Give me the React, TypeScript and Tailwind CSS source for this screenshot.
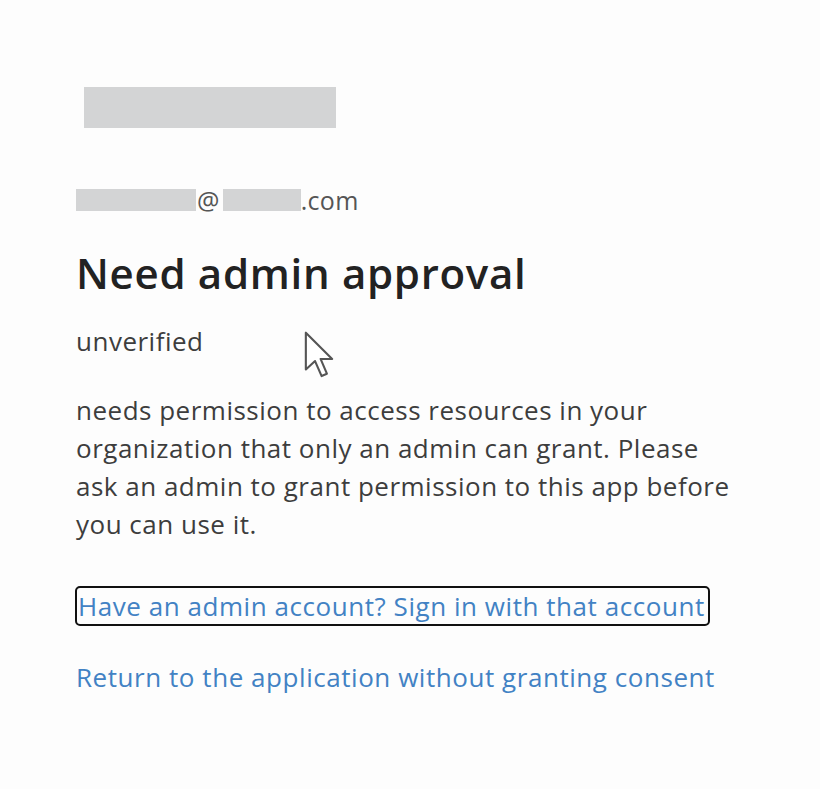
export default function App() {
  return (
    <div
      className="relative h-[789px] w-[820px] overflow-hidden bg-[#fdfdfd] text-[#3d3d3d]"
      style={{ fontFamily: '"Open Sans", "Noto Sans", sans-serif' }}
    >
      <div className="flex flex-col pl-[76px] pt-[87px]">
        {/* redacted app name */}
        <div className="ml-[8px] h-[41px] w-[252px] bg-[#d3d4d5]" />

        {/* redacted account */}
        <div className="mt-[54px] flex h-[36px] items-center text-[25px] leading-none tracking-[0.3px] text-[#555]">
          <span className="h-[22px] w-[120px] bg-[#d3d4d5]" />
          <span className="ml-[1px]">@</span>
          <span className="ml-[3px] h-[22px] w-[78px] bg-[#d3d4d5]" />
          <span>.com</span>
        </div>

        <h1 className="mt-[30px] text-[42px] font-semibold leading-[50px] tracking-[0.7px] text-[#222]">
          Need admin approval
        </h1>

        <p className="mt-[24px] text-[26px] leading-[38px] tracking-[0.5px]">
          unverified
        </p>

        <p className="mt-[31px] w-[665px] text-[26px] leading-[38px] tracking-[0.5px]">
          needs permission to access resources in your organization that only
          an admin can grant. Please ask an admin to grant permission to this
          app before you can use it.
        </p>

        <div className="mt-[43px] flex flex-col items-start text-[26px] leading-[36px] tracking-[0.55px] text-[#4282c4]">
          <a
            href="#"
            className="-ml-[1px] w-[635px] whitespace-nowrap rounded-[5px] border-2 border-[#111] pl-[1px]"
          >
            Have an admin account? Sign in with that account
          </a>
          <a href="#" className="mt-[33px]">
            Return to the application without granting consent
          </a>
        </div>
      </div>

      {/* mouse pointer */}
      <svg
        className="absolute left-[300px] top-[330px]"
        width="38"
        height="50"
        viewBox="0 0 12 19"
      >
        <path
          d="M1 1 L1 15 L4.5 11.8 L7 17.5 L9 16.6 L6.6 11 L11 11 Z"
          fill="#fff"
          stroke="#555"
          strokeWidth="0.8"
          strokeLinejoin="round"
        />
      </svg>
    </div>
  );
}
